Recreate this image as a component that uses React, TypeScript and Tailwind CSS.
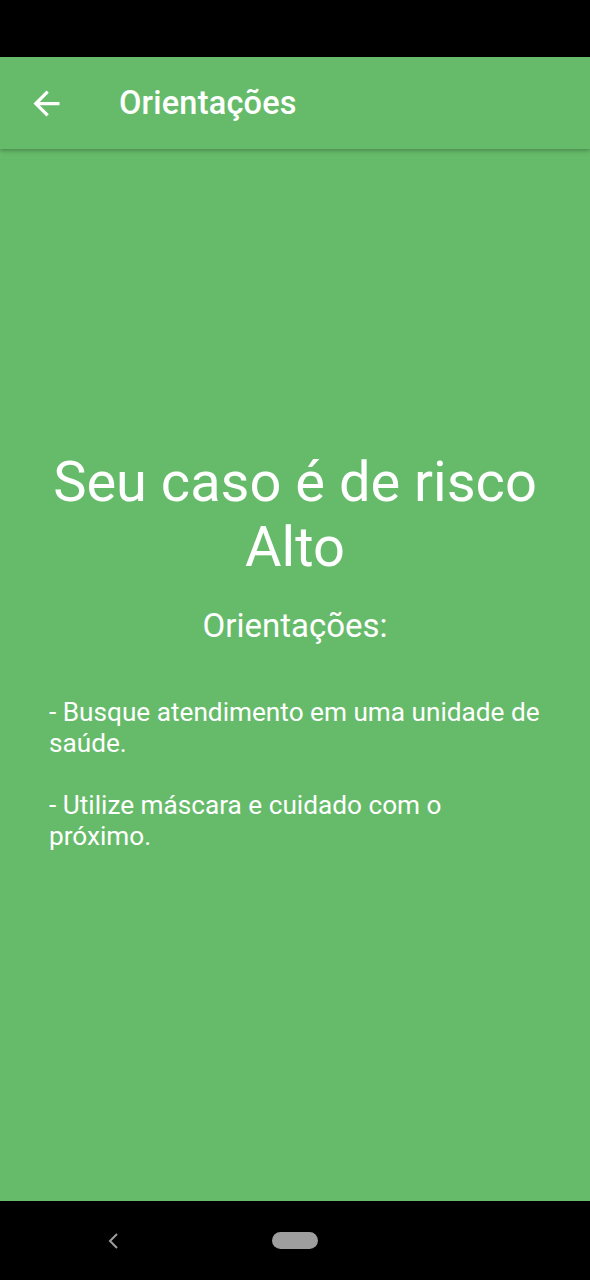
export default function App() {
  return (
    <div
      className="w-[590px] h-[1280px] flex flex-col bg-black text-white"
      style={{ fontFamily: "Roboto, 'Noto Sans', sans-serif" }}
    >
      {/* status bar */}
      <div className="h-[57px] bg-black" />

      {/* app bar */}
      <div className="relative z-10 h-[92px] flex items-center bg-[#66bb6a] shadow-[0_2px_4px_rgba(0,0,0,0.25)]">
        <div className="w-[92px] flex items-center justify-center">
          <svg width="39" height="39" viewBox="0 0 24 24" fill="white">
            <path d="M20 11H7.83l5.59-5.59L12 4l-8 8 8 8 1.41-1.41L7.83 13H20v-2z" />
          </svg>
        </div>
        <h1 className="ml-[27px] text-[32.5px] font-medium leading-none tracking-[0.2px]">Orientações</h1>
      </div>

      {/* body */}
      <div className="flex-1 bg-[#66bb6a] flex flex-col items-center pt-[301px]">
        <h2 className="text-center text-[56px] leading-[65px]">
          Seu caso é de risco
          <br />
          Alto
        </h2>
        <p className="mt-[27px] text-center text-[33px] leading-[38px]">Orientações:</p>
        <div className="mt-[52px] self-start ml-[49px] w-[496px] text-[26.2px] leading-[31px]">
          <p>- Busque atendimento em uma unidade de saúde.</p>
          <p className="mt-[31px]">- Utilize máscara e cuidado com o próximo.</p>
        </div>
      </div>

      {/* nav bar */}
      <div className="h-[79px] bg-black flex items-center">
        <div className="w-[590px] flex items-center">
          <svg className="ml-[105px]" width="16" height="18" viewBox="0 0 16 18" fill="none">
            <path d="M12 2L5 9l7 7" stroke="#9e9e9e" strokeWidth="2" />
          </svg>
          <div className="ml-[151px] w-[46px] h-[17px] rounded-full bg-[#9e9e9e]" />
        </div>
      </div>
    </div>
  );
}
